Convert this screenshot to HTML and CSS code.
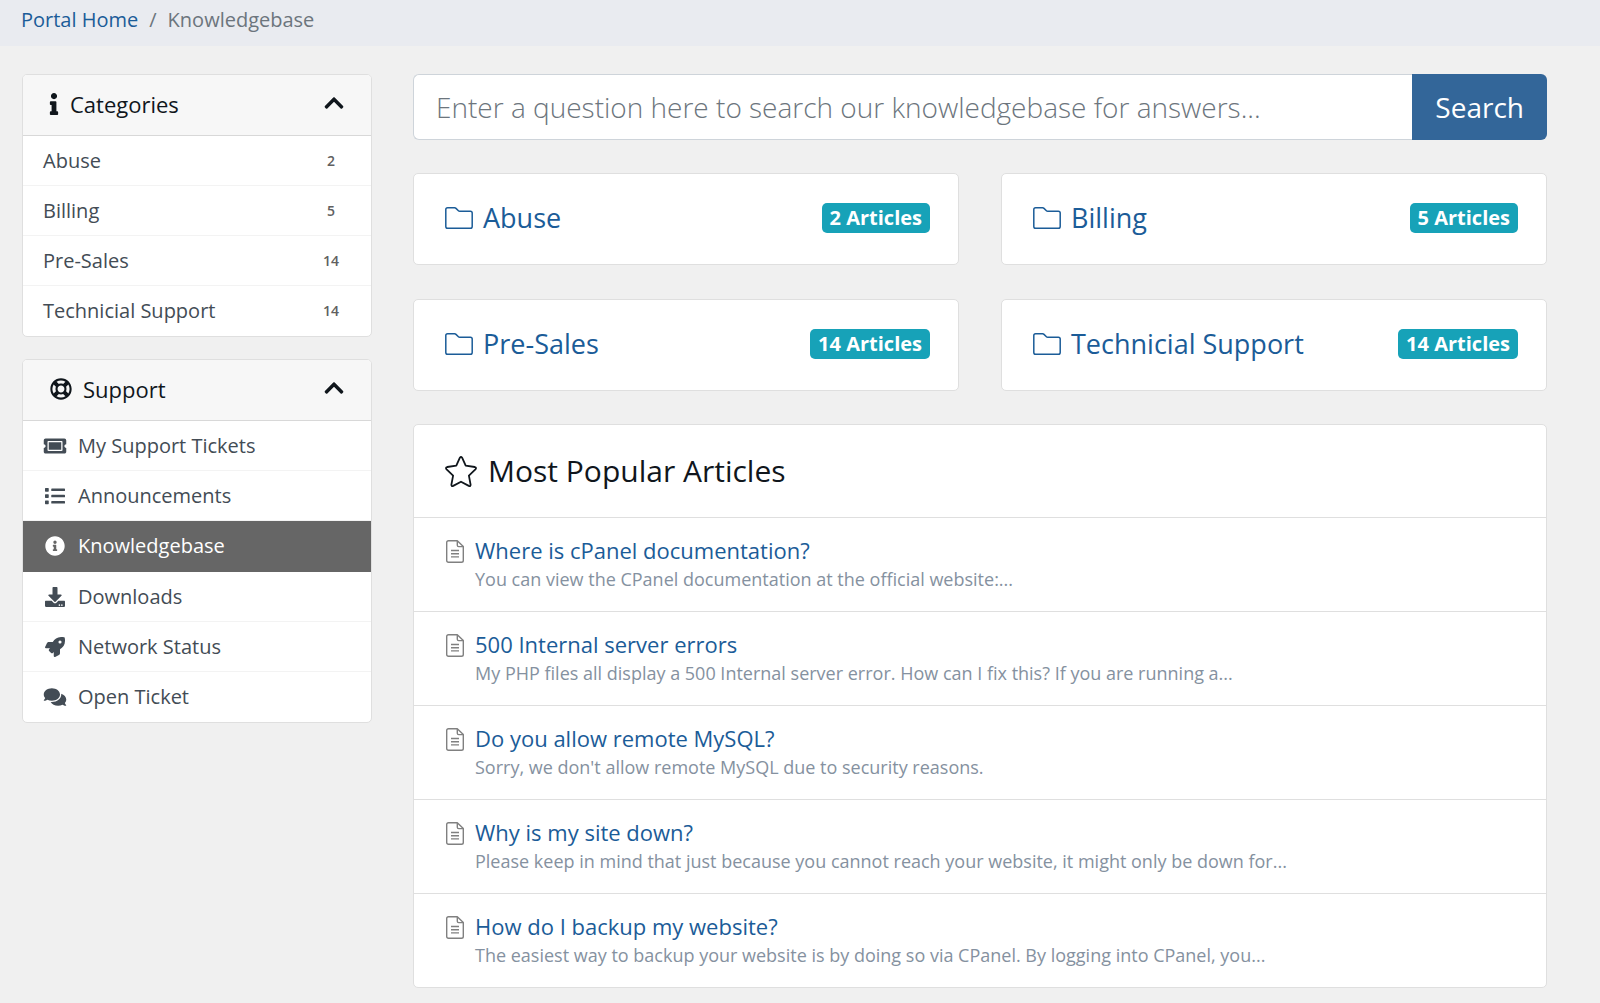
FILE: index.html
```html
<!DOCTYPE html>
<html lang="en">
<head>
<meta charset="utf-8">
<meta name="viewport" content="width=device-width, initial-scale=1">
<title>Knowledgebase</title>
<link rel="stylesheet" href="styles.css">
</head>
<body>
<svg class="sprite" aria-hidden="true">
  <symbol id="chevron-up" viewBox="0 0 448 512"><path d="M240.971 130.524l194.343 194.343c9.373 9.373 9.373 24.569 0 33.941l-22.667 22.667c-9.357 9.357-24.522 9.375-33.901.04L224 227.495 69.255 381.516c-9.379 9.335-24.544 9.317-33.901-.04l-22.667-22.667c-9.373-9.373-9.373-24.569 0-33.941L207.03 130.525c9.372-9.373 24.568-9.373 33.941-.001z"/></symbol>
  <symbol id="folder" viewBox="0 0 28 22"><path fill="none" stroke="currentColor" stroke-width="1.5" stroke-linejoin="round" d="M2.600 .8H9.600Q10.400 .8 11 1.400L13.400 3.700Q13.900 4.200 14.700 4.200H25.400Q27.200 4.200 27.200 6V19.400Q27.200 21.200 25.400 21.200H2.600Q.8 21.200 .8 19.400V2.600Q.8 .8 2.600 .8Z"/></symbol>
  <symbol id="file" viewBox="0 0 18 23"><path fill="none" stroke="currentColor" stroke-width="1.400" stroke-linejoin="round" d="M2.500 .7H11.300L17.300 6.600V20.500Q17.300 22.300 15.500 22.300H2.500Q.7 22.300 .7 20.500V2.500Q.7 .7 2.500 .7ZM11.300 .7V5.200Q11.300 6.600 12.700 6.600H17.300M5 10.500H13M5 13.700H13M5 16.900H13"/></symbol>
</svg>

<nav class="breadcrumb" aria-label="Breadcrumb">
  <a href="#">Portal Home</a><span class="separator">/</span><span>Knowledgebase</span>
</nav>

<div class="layout">
  <aside class="sidebar">
    <section class="panel">
      <h2 class="panel-header">
        <svg class="icon-info" viewBox="0 0 192 512"><path d="M20 424.229h20V279.771H20c-11.046 0-20-8.954-20-20V212c0-11.046 8.954-20 20-20h112c11.046 0 20 8.954 20 20v212.229h20c11.046 0 20 8.954 20 20V492c0 11.046-8.954 20-20 20H20c-11.046 0-20-8.954-20-20v-47.771c0-11.046 8.954-20 20-20zM96 0C56.235 0 24 32.235 24 72s32.235 72 72 72 72-32.235 72-72S135.764 0 96 0z"/></svg>
        Categories
        <button class="toggle" type="button" aria-label="Collapse categories"><svg><use href="#chevron-up"/></svg></button>
      </h2>
      <nav class="panel-list">
        <a href="#">Abuse<span class="count">2</span></a>
        <a href="#">Billing<span class="count">5</span></a>
        <a href="#">Pre-Sales<span class="count">14</span></a>
        <a href="#">Technicial Support<span class="count">14</span></a>
      </nav>
    </section>

    <section class="panel">
      <h2 class="panel-header">
        <svg class="icon-ring" viewBox="0 0 512 512"><path d="M256 504c136.967 0 248-111.033 248-248S392.967 8 256 8 8 119.033 8 256s111.033 248 248 248zm-103.398-76.720l53.411-53.411c31.806 13.506 68.128 13.522 99.974 0l53.411 53.411c-63.217 38.319-143.579 38.319-206.796 0zM336 256c0 44.112-35.888 80-80 80s-80-35.888-80-80 35.888-80 80-80 80 35.888 80 80zm91.280 103.398l-53.411-53.411c13.505-31.806 13.522-68.128 0-99.974l53.411-53.411c38.319 63.217 38.319 143.579 0 206.796zM359.397 84.720l-53.411 53.411c-31.806-13.505-68.128-13.522-99.973 0L152.602 84.720c63.217-38.319 143.579-38.319 206.795 0zM84.720 152.602l53.411 53.411c-13.506 31.806-13.522 68.128 0 99.974L84.720 359.398c-38.319-63.217-38.319-143.579 0-206.796z"/></svg>
        Support
        <button class="toggle" type="button" aria-label="Collapse support"><svg><use href="#chevron-up"/></svg></button>
      </h2>
      <nav class="panel-list">
        <a href="#"><svg viewBox="0 0 576 512"><path d="M128 160h320v192H128V160zm400 96c0 26.510 21.490 48 48 48v96c0 26.510-21.490 48-48 48H48c-26.510 0-48-21.490-48-48v-96c26.510 0 48-21.490 48-48s-21.490-48-48-48v-96c0-26.510 21.490-48 48-48h480c26.510 0 48 21.490 48 48v96c-26.510 0-48 21.490-48 48zm-48-104c0-13.255-10.745-24-24-24H120c-13.255 0-24 10.745-24 24v208c0 13.255 10.745 24 24 24h336c13.255 0 24-10.745 24-24V152z"/></svg>My Support Tickets</a>
        <a href="#"><svg viewBox="0 0 512 512"><path d="M16 48h64a16 16 0 0 1 16 16v64a16 16 0 0 1-16 16H16a16 16 0 0 1-16-16V64a16 16 0 0 1 16-16zM16 208h64a16 16 0 0 1 16 16v64a16 16 0 0 1-16 16H16a16 16 0 0 1-16-16v-64a16 16 0 0 1 16-16zM16 368h64a16 16 0 0 1 16 16v64a16 16 0 0 1-16 16H16a16 16 0 0 1-16-16v-64a16 16 0 0 1 16-16zM176 64h320a16 16 0 0 1 16 16v32a16 16 0 0 1-16 16H176a16 16 0 0 1-16-16V80a16 16 0 0 1 16-16zM176 224h320a16 16 0 0 1 16 16v32a16 16 0 0 1-16 16H176a16 16 0 0 1-16-16v-32a16 16 0 0 1 16-16zM176 384h320a16 16 0 0 1 16 16v32a16 16 0 0 1-16 16H176a16 16 0 0 1-16-16v-32a16 16 0 0 1 16-16z"/></svg>Announcements</a>
        <a href="#" class="active" aria-current="page"><svg viewBox="0 0 512 512"><path d="M256 8C119.043 8 8 119.083 8 256c0 136.997 111.043 248 248 248s248-111.003 248-248C504 119.083 392.957 8 256 8zm0 110c23.196 0 42 18.804 42 42s-18.804 42-42 42-42-18.804-42-42 18.804-42 42-42zm56 254c0 6.627-5.373 12-12 12h-88c-6.627 0-12-5.373-12-12v-24c0-6.627 5.373-12 12-12h12v-64h-12c-6.627 0-12-5.373-12-12v-24c0-6.627 5.373-12 12-12h64c6.627 0 12 5.373 12 12v100h12c6.627 0 12 5.373 12 12v24z"/></svg>Knowledgebase</a>
        <a href="#"><svg viewBox="0 0 512 512"><path d="M216 0h80c13.300 0 24 10.700 24 24v168h87.700c17.800 0 26.700 21.500 14.100 34.100L269.700 378.300c-7.500 7.500-19.800 7.500-27.300 0L90.100 226.100c-12.600-12.600-3.700-34.100 14.100-34.100H192V24c0-13.300 10.700-24 24-24zm296 376v112c0 13.300-10.700 24-24 24H24c-13.300 0-24-10.700-24-24V376c0-13.300 10.700-24 24-24h146.700l49 49c20.100 20.100 52.500 20.100 72.600 0l49-49H488c13.300 0 24 10.700 24 24zm-124 88c0-11-9-20-20-20s-20 9-20 20 9 20 20 20 20-9 20-20zm64 0c0-11-9-20-20-20s-20 9-20 20 9 20 20 20 20-9 20-20z"/></svg>Downloads</a>
        <a href="#"><svg viewBox="0 0 512 512"><path d="M505.120 19.094c-1.189-5.531-6.658-11-12.207-12.188C460.716 0 435.507 0 410.407 0 307.175 0 245.269 55.203 199.052 128H94.838c-16.348.016-35.557 11.875-42.887 26.484L2.516 253.297A28.400 28.400 0 0 0 0 264a24.009 24.009 0 0 0 24.006 24H127.816l-22.475 22.469c-11.365 11.361-12.996 32.258 0 45.250L156.246 406.625c11.156 11.188 32.156 13.156 45.277 0l22.475-22.469V488a24.009 24.009 0 0 0 24.006 24 28.559 28.559 0 0 0 10.707-2.516l98.728-49.390c14.629-7.297 26.508-26.500 26.508-42.860V312.797c72.598-46.313 128.035-108.406 128.035-211.094C512.075 76.500 512.075 51.297 505.120 19.094ZM384.040 168A40 40 0 1 1 424.050 128 40.023 40.023 0 0 1 384.040 168Z"/></svg>Network Status</a>
        <a href="#"><svg viewBox="0 0 576 512"><path d="M416 192c0-88.400-93.100-160-208-160S0 103.600 0 192c0 34.300 14.100 65.900 38 92-13.400 30.200-35.500 54.200-35.800 54.500-2.200 2.300-2.800 5.700-1.500 8.700S4.800 352 8 352c36.600 0 66.900-12.300 88.700-25 32.200 15.700 70.300 25 111.300 25 114.900 0 208-71.600 208-160zm122 220c23.900-26 38-57.700 38-92 0-66.900-53.500-124.200-129.300-148.100.9 6.600 1.300 13.300 1.300 20.100 0 105.900-107.700 192-240 192-10.800 0-21.300-.8-31.700-1.900C207.800 439.600 281.800 480 368 480c41 0 79.100-9.200 111.300-25 21.800 12.700 52.100 25 88.700 25 3.200 0 6.100-1.900 7.300-4.800 1.300-2.900.7-6.300-1.500-8.700-.3-.2-22.400-24.200-35.800-54.500z"/></svg>Open Ticket</a>
      </nav>
    </section>
  </aside>

  <main class="content">
    <form class="search" role="search">
      <input type="text" aria-label="Search the knowledgebase" placeholder="Enter a question here to search our knowledgebase for answers...">
      <button type="button">Search</button>
    </form>

    <div class="categories">
      <div class="category"><a href="#"><svg><use href="#folder"/></svg>Abuse</a><span class="badge">2 Articles</span></div>
      <div class="category"><a href="#"><svg><use href="#folder"/></svg>Billing</a><span class="badge">5 Articles</span></div>
      <div class="category"><a href="#"><svg><use href="#folder"/></svg>Pre-Sales</a><span class="badge">14 Articles</span></div>
      <div class="category"><a href="#"><svg><use href="#folder"/></svg>Technicial Support</a><span class="badge">14 Articles</span></div>
    </div>

    <section class="popular">
      <h1 class="popular-header">
        <svg viewBox="0 0 32 31"><path fill="none" stroke="currentColor" stroke-width="1.800" stroke-linejoin="round" d="M14.900 1.700Q16 .2 17.100 1.700L20.700 9.700L29.800 11Q31.900 11.600 30.400 13.300L23.900 19.600L25.600 28.600Q25.700 30.600 23.800 29.900L16 25.700L8.200 29.900Q6.300 30.600 6.400 28.600L8.100 19.600L1.600 13.300Q.1 11.600 2.200 11L11.300 9.700Z"/></svg>
        Most Popular Articles
      </h1>
      <article class="article">
        <svg><use href="#file"/></svg>
        <div><a href="#">Where is cPanel documentation?</a><p>You can view the CPanel documentation at the official website:...</p></div>
      </article>
      <article class="article">
        <svg><use href="#file"/></svg>
        <div><a href="#">500 Internal server errors</a><p>My PHP files all display a 500 Internal server error. How can I fix this? If you are running a...</p></div>
      </article>
      <article class="article">
        <svg><use href="#file"/></svg>
        <div><a href="#">Do you allow remote MySQL?</a><p>Sorry, we don't allow remote MySQL due to security reasons.</p></div>
      </article>
      <article class="article">
        <svg><use href="#file"/></svg>
        <div><a href="#">Why is my site down?</a><p>Please keep in mind that just because you cannot reach your website, it might only be down for...</p></div>
      </article>
      <article class="article">
        <svg><use href="#file"/></svg>
        <div><a href="#">How do I backup my website?</a><p>The easiest way to backup your website is by doing so via CPanel. By logging into CPanel, you...</p></div>
      </article>
    </section>
  </main>
</div>
</body>
</html>
```
FILE: styles.css
```css
*, *::before, *::after { box-sizing: border-box; }

body {
  margin: 0;
  background: #f0f0f0;
  color: #10161c;
  font-family: "Open Sans", "Noto Sans", sans-serif;
  font-size: 20px;
  line-height: 30px;
}

a { color: #1b5c98; text-decoration: none; }
svg { flex: none; fill: currentColor; }
.sprite { display: none; }
h1, h2, p { margin: 0; font-weight: 400; }

.breadcrumb {
  display: flex;
  gap: 11px;
  padding: 5px 21px 11px;
  background: #e9ebf0;
  color: #6c757d;
}

.layout {
  display: grid;
  grid-template-columns: 350px minmax(0, 1fr);
  gap: 41px;
  align-items: start;
  padding: 28px 53px 16px 22px;
}

/* Sidebar panels */
.sidebar { display: grid; gap: 22px; }

.panel {
  overflow: hidden;
  background: #fff;
  border: 1px solid #dfdfdf;
  border-radius: 5px;
}

.panel-header {
  display: flex;
  align-items: center;
  height: 61px;
  padding: 0 27px 2px 26px;
  background: #f7f7f7;
  border-bottom: 1px solid #d8d8d8;
  font-size: 22px;
}

.icon-info { width: 10px; height: 22px; margin-right: 11px; }
.icon-ring { width: 24px; height: 22px; margin-right: 10px; }

.toggle {
  display: flex;
  margin: 0 0 3px auto;
  padding: 0;
  border: 0;
  background: none;
  color: inherit;
}
.toggle svg { width: 20px; height: 22px; }

.panel-list a {
  display: flex;
  align-items: center;
  height: 50px;
  padding: 0 20px;
  border-bottom: 1px solid #f3f3f3;
  color: #434c55;
}
.panel-list a:last-child { border-bottom: 0; }
.panel-list .active { height: 51px; background: #666; border-color: #666; color: #fff; }
.panel-list svg { width: 24px; height: 20px; margin-right: 11px; }

.count {
  min-width: 40px;
  margin-left: auto;
  color: #606060;
  font-size: 14px;
  font-weight: 600;
  text-align: center;
}

/* Search */
.search { display: flex; height: 66px; }

.search input {
  flex: 1;
  min-width: 0;
  padding: 0 22px;
  border: 1px solid #ced4da;
  border-right: 0;
  border-radius: 6px 0 0 6px;
  background: #fff;
  color: #495057;
  font: 300 28px "Open Sans", "Noto Sans", sans-serif;
}
.search input::placeholder { color: #6c757d; opacity: 1; }

.search button {
  padding: 0 23px;
  border: 0;
  border-radius: 0 6px 6px 0;
  background: #336699;
  color: #fff;
  font: 400 28px "Open Sans", "Noto Sans", sans-serif;
}

/* Category cards */
.categories {
  display: grid;
  grid-template-columns: 1fr 1fr;
  gap: 34px 42px;
  margin: 33px 0;
}

.category {
  display: flex;
  align-items: center;
  justify-content: space-between;
  height: 92px;
  padding: 0 28px 3px 31px;
  background: #fff;
  border: 1px solid #dfdfdf;
  border-radius: 5px;
}
.category a { display: flex; align-items: center; gap: 10px; font-size: 27px; line-height: 32px; }
.category svg { width: 28px; height: 22px; }

.badge {
  padding: 0 8px;
  border-radius: 5px;
  background: #17a2b8;
  color: #fff;
  font-size: 20px;
  font-weight: 700;
}

/* Popular articles */
.popular {
  background: #fff;
  border: 1px solid #dfdfdf;
  border-radius: 5px;
}

.popular-header {
  display: flex;
  align-items: center;
  gap: 11px;
  height: 92px;
  padding: 0 31px;
  font-size: 30px;
}
.popular-header svg { width: 32px; height: 31px; }

.article {
  display: flex;
  gap: 11px;
  padding: 17px 32px;
  border-top: 1px solid #dfdfdf;
}
.article svg { width: 18px; height: 23px; margin-top: 5px; color: #808080; }
.article a { display: block; font-size: 22px; }
.article p { color: #8591a0; font-size: 18px; line-height: 29px; }
```
